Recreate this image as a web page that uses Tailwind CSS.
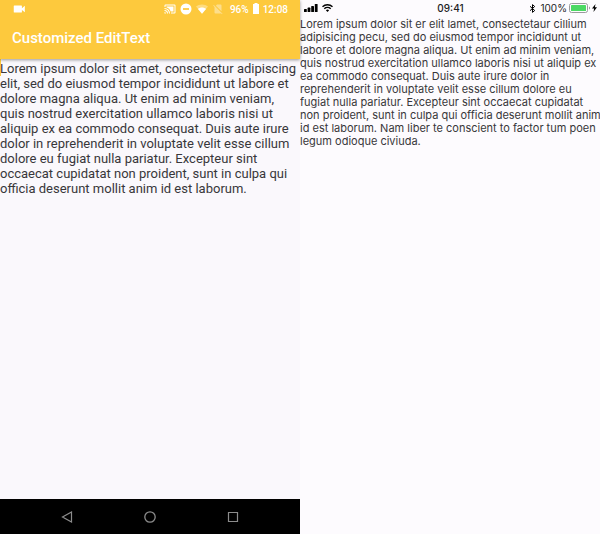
<!DOCTYPE html>
<html lang="en">
<head>
  <meta charset="UTF-8" />
  <meta name="viewport" content="width=device-width, initial-scale=1" />
  <title>Customized EditText</title>
  <script src="https://cdn.jsdelivr.net/npm/@tailwindcss/browser@4"></script>
</head>
<body class="min-h-screen grid grid-cols-2 bg-[#fdfbfe]">
  <!-- Android -->
  <section class="flex flex-col min-w-0 bg-[#faf8fc] font-[Roboto,sans-serif]">
    <header class="relative bg-[#fdc93d] text-white shadow-[0_1px_3px_rgba(0,0,0,0.4)]">
      <div class="flex items-center h-[18px] px-3 text-[10px] font-medium">
        <svg class="w-[14px] h-[14px]" viewBox="0 0 24 24" fill="currentColor"><path d="M17 10.500V7a1 1 0 0 0-1-1H4a1 1 0 0 0-1 1v10a1 1 0 0 0 1 1h12a1 1 0 0 0 1-1v-3.500l5 4v-11z"/></svg>
        <div class="flex items-center gap-1 ml-auto">
          <svg class="w-3 h-3" viewBox="0 0 24 24" fill="currentColor"><path d="M1 18v3h3a3 3 0 0 0-3-3zm0-4v2a5 5 0 0 1 5 5h2a7 7 0 0 0-7-7zm18-7H5v1.600c4 1.300 7 4.400 8.400 8.400H19zM1 10v2a9 9 0 0 1 9 9h2A11 11 0 0 0 1 10zm20-7H3a2 2 0 0 0-2 2v3h2V5h18v14h-7v2h7a2 2 0 0 0 2-2V5a2 2 0 0 0-2-2z"/></svg>
          <svg class="w-3 h-3" viewBox="0 0 24 24"><circle cx="12" cy="12" r="11" fill="#fff"/><path d="M6 12h12" stroke="#fdc93d" stroke-width="3.500"/></svg>
          <svg class="w-3 h-3" viewBox="0 0 24 24" fill="currentColor"><path d="M12 21.500 24 7C21 4.700 16.700 3 12 3S3 4.700 0 7z" opacity=".35"/><path d="m12 21.500 8-9.700c-2-1.600-5-2.800-8-2.800s-6 1.200-8 2.800z"/></svg>
          <svg class="w-3 h-3 opacity-40" viewBox="0 0 24 24" fill="currentColor"><path d="M19 5a2 2 0 0 0-2-2h-7L7.700 5.300 19 16.700zM3.700 3.900 2.400 5.200 5 7.800V19a2 2 0 0 0 2 2h10c.4 0 .7-.1 1-.3l1.900 1.900 1.200-1.200z"/></svg>
          <span class="ml-[2px]">96%</span>
          <svg class="w-[6px] h-3" viewBox="0 0 6 12" fill="currentColor"><path d="M1.500 0h3v1H6v10H0V1h1.500z"/></svg>
          <span>12:08</span>
        </div>
      </div>
      <h1 class="flex items-center h-[41px] px-3 text-[15px] font-medium">Customized EditText</h1>
    </header>
    <textarea aria-label="Android text" spellcheck="false" class="flex-1 w-full pt-[2px] resize-none outline-none overflow-hidden bg-[linear-gradient(#fdc93d,#fdc93d)] bg-[length:1px_17px] bg-no-repeat text-[13px] leading-[15px] text-[#38373a]">Lorem ipsum dolor sit amet, consectetur adipiscing elit, sed do eiusmod tempor incididunt ut labore et dolore magna aliqua. Ut enim ad minim veniam, quis nostrud exercitation ullamco laboris nisi ut aliquip ex ea commodo consequat. Duis aute irure dolor in reprehenderit in voluptate velit esse cillum dolore eu fugiat nulla pariatur. Excepteur sint occaecat cupidatat non proident, sunt in culpa qui officia deserunt mollit anim id est laborum.</textarea>
    <nav class="flex items-center justify-center gap-[71px] h-[35px] bg-black text-[#8c8c8c]">
      <button aria-label="Back"><svg class="w-3 h-3" viewBox="0 0 12 12" fill="none" stroke="currentColor" stroke-width="1.200"><path d="M10.500 1v10L1.500 6z"/></svg></button>
      <button aria-label="Home"><svg class="w-3 h-3" viewBox="0 0 12 12" fill="none" stroke="currentColor" stroke-width="1.300"><circle cx="6" cy="6" r="5.200"/></svg></button>
      <button aria-label="Recents"><svg class="w-3 h-3" viewBox="0 0 12 12" fill="none" stroke="currentColor" stroke-width="1.200"><path d="M1.500 1.500h9v9h-9z"/></svg></button>
    </nav>
  </section>

  <!-- iOS -->
  <section class="flex flex-col min-w-0 font-[Inter,sans-serif]">
    <header class="grid grid-cols-3 items-center h-4 pl-1 pr-[3px] text-[10px] text-[#1c1c1e]">
      <div class="flex items-center gap-1">
        <svg class="w-[14px] h-2" viewBox="0 0 14 8" fill="#000"><rect y="5" width="2.800" height="3" rx=".6"/><rect x="3.600" y="3.600" width="2.800" height="4.400" rx=".6"/><rect x="7.200" y="2" width="2.800" height="6" rx=".6"/><rect x="10.800" width="2.800" height="8" rx=".6"/></svg>
        <svg class="w-[11px] h-2" viewBox="0 0 11 8" fill="none" stroke="#000" stroke-width="1.400"><path d="M.5 2.800a7.200 7.200 0 0 1 10 0M2.300 4.800a4.600 4.600 0 0 1 6.400 0"/><path d="M5.500 8 3.900 6.300a2.300 2.300 0 0 1 3.200 0z" fill="#000" stroke="none"/></svg>
      </div>
      <span class="text-center font-medium">09:41</span>
      <div class="flex items-center justify-end gap-[2px]">
        <svg class="w-[7px] h-[9px] mr-[2px]" viewBox="0 0 7 9" fill="none" stroke="#000"><path d="m1 2.300 4.700 4.200L3.500 8.400V.6l2.200 1.900L1 6.700"/></svg>
        <span>100%</span>
        <svg class="w-[21px] h-[10px]" viewBox="0 0 21 10"><rect x=".5" y=".5" width="18" height="9" rx="2" fill="none" stroke="#9b9a9d"/><rect x="2" y="2" width="15" height="6" rx=".6" fill="#4cd964"/><path d="M20 3.500v3c1-.5 1-2.500 0-3z" fill="#777"/></svg>
        <svg class="w-[5px] h-2" viewBox="0 0 5 8" fill="#000"><path d="M3.500 0 0 4.500h2.100L1.500 8 5 3.300H2.900z"/></svg>
      </div>
    </header>
    <textarea aria-label="iOS text" spellcheck="false" wrap="off" class="flex-1 w-full pt-[2px] resize-none outline-none overflow-hidden whitespace-pre text-[11px] leading-[13px] text-[#38373a]">Lorem ipsum dolor sit er elit lamet, consectetaur cillium
adipisicing pecu, sed do eiusmod tempor incididunt ut
labore et dolore magna aliqua. Ut enim ad minim veniam,
quis nostrud exercitation ullamco laboris nisi ut aliquip ex
ea commodo consequat. Duis aute irure dolor in
reprehenderit in voluptate velit esse cillum dolore eu
fugiat nulla pariatur. Excepteur sint occaecat cupidatat
non proident, sunt in culpa qui officia deserunt mollit anim
id est laborum. Nam liber te conscient to factor tum poen
legum odioque civiuda.</textarea>
  </section>
</body>
</html>
